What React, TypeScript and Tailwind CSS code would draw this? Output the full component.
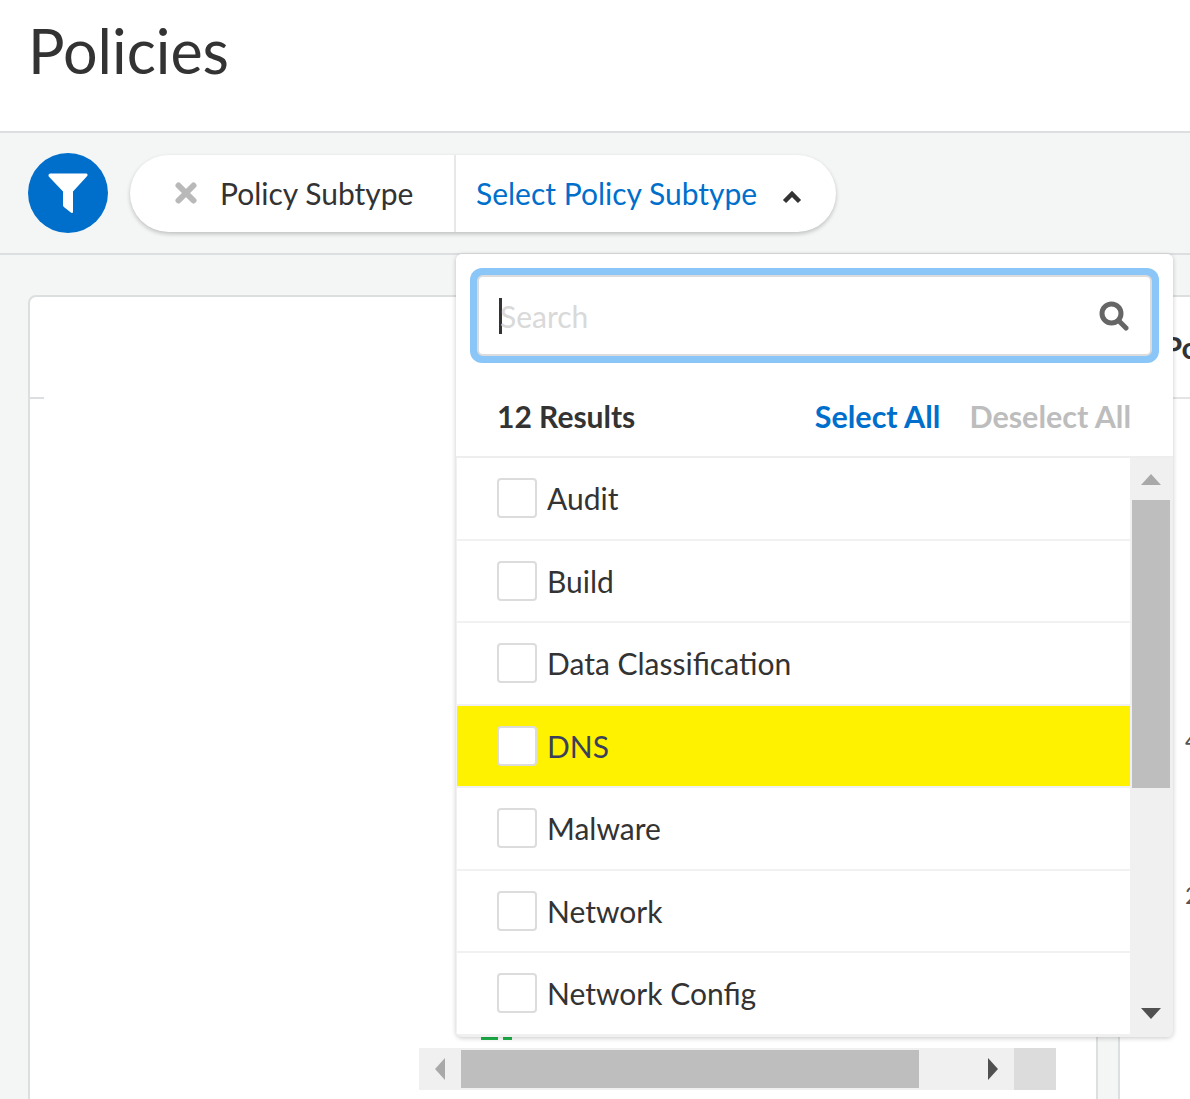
const options = ["Audit", "Build", "Data Classification", "DNS", "Malware", "Network", "Network Config"];

function FilterIcon() {
  return (
    <svg viewBox="0 0 40 40" className="w-[40px] h-[40px]">
      <path
        d="M0.5 2.5 C0.5 1.2 1.2 0.5 2.5 0.5 H38 C39.5 0.5 40 2 39.2 3 L25 18.5 V38.5 C25 40 24 40.3 23.2 39.7 L16.5 34.5 C15.5 33.8 15 33 15 32 V18.5 L1 3.8 C0.7 3.4 0.5 3 0.5 2.5 Z"
        fill="#fff"
      />
    </svg>
  );
}

function ClearIcon() {
  return (
    <svg viewBox="0 0 22 22" className="w-[22px] h-[22px] ml-[1px] -mt-[2px]">
      <path d="M3.5 3.5 L18.5 18.5 M18.5 3.5 L3.5 18.5" stroke="#b9b9b9" strokeWidth="6" strokeLinecap="round" />
    </svg>
  );
}

function ChevronUp() {
  return (
    <svg viewBox="0 0 20 14" className="w-[20px] h-[14px] mt-[6px]">
      <path d="M2.5 11.5 L10 4 L17.5 11.5" fill="none" stroke="#333" strokeWidth="4.5" strokeLinejoin="miter" />
    </svg>
  );
}

function SearchIcon() {
  return (
    <svg viewBox="0 0 30 30" className="w-[30px] h-[30px] mr-[-1px]">
      <circle cx="12.5" cy="12.5" r="9.5" fill="none" stroke="#666" strokeWidth="5" />
      <path d="M19.5 19.5 L27 27" stroke="#666" strokeWidth="5" strokeLinecap="round" />
    </svg>
  );
}

function OptionRow({ label }: { label: string }) {
  const active = label === "DNS";
  return (
    <div
      className={
        "flex items-center h-[82.5px] pl-[40px] gap-[10px] border-b-2 border-[#f1f1f1] " +
        (active ? "bg-[#fff200]" : "bg-white")
      }
    >
      <span className="w-[40px] h-[40px] shrink-0 rounded-[4px] bg-white border-2 border-[#dcdcdc]" />
      <span className={"text-[30px] leading-none " + (active ? "text-[#3a3f5c]" : "text-[#333]")}>{label}</span>
    </div>
  );
}

function OptionsScrollbar() {
  return (
    <div className="w-[42px] shrink-0 mr-[1px] -mb-[3px] bg-[#f0f0f0] flex flex-col items-center">
      <div className="h-[42px] w-full flex items-center justify-center">
        <span className="w-0 h-0 border-x-[10px] border-x-transparent border-b-[11px] border-b-[#a9a9a9]" />
      </div>
      <div className="w-[38px] h-[288px] bg-[#bebebe]" />
      <div className="flex-1 w-full flex items-end justify-center pb-[18px]">
        <span className="w-0 h-0 border-x-[10px] border-x-transparent border-t-[11px] border-t-[#505050]" />
      </div>
    </div>
  );
}

function Dropdown() {
  return (
    <div className="absolute left-[456px] top-[254px] w-[717px] h-[783px] bg-[#f0f0f0] rounded-[6px] shadow-[0_1px_5px_rgba(0,0,0,0.22)] overflow-hidden flex flex-col">
      <div className="bg-white px-[14px] pt-[14px]">
        <div className="h-[95px] w-[689px] rounded-[12px] bg-[#8ac6f8] p-[7px]">
          <div className="h-full rounded-[6px] bg-white border-2 border-[#dcdcdc] flex items-center justify-between pl-[20px] pr-[22px]">
            <div className="flex items-center">
              <span className="w-[3px] h-[36px] bg-[#333]" />
              <span className="text-[30px] leading-none text-[#d9d9d9] -ml-[2px]">Search</span>
            </div>
            <SearchIcon />
          </div>
        </div>
      </div>
      <div className="bg-white h-[95px] shrink-0 flex items-center justify-between pl-[41px] pr-[42px] pt-[14px] border-b-2 border-[#eeeeee]">
        <span className="text-[30px] leading-none font-bold text-[#333] -mt-[2px]">12 Results</span>
        <div className="flex items-center gap-[29px] text-[30.5px] leading-none font-bold">
          <span className="text-[#006fcc]">Select All</span>
          <span className="text-[#bdbdbd]">Deselect All</span>
        </div>
      </div>
      <div className="flex-1 min-h-0 flex mb-[3px]">
        <div className="flex-1 overflow-hidden border-l border-[#f1f1f1] bg-white">
          {options.map((o) => (
            <OptionRow key={o} label={o} />
          ))}
        </div>
        <OptionsScrollbar />
      </div>
    </div>
  );
}

function TableScrollbar() {
  return (
    <div className="absolute left-[419px] top-[1048px] w-[637px] h-[42px] flex bg-[#f0f0f0]">
      <div className="w-[42px] flex items-center justify-center">
        <span className="w-0 h-0 border-y-[11px] border-y-transparent border-r-[10px] border-r-[#a9a9a9]" />
      </div>
      <div className="w-[458px] h-[38px] my-[2px] bg-[#bebebe]" />
      <div className="w-[95px] flex items-center justify-end pr-[16px]">
        <span className="w-0 h-0 border-y-[11px] border-y-transparent border-l-[10px] border-l-[#505050]" />
      </div>
      <div className="w-[42px] bg-[#dcdcdc]" />
    </div>
  );
}

export default function App() {
  return (
    <div className="relative h-[1099px] overflow-hidden bg-[#f4f5f5] font-['Lato',sans-serif] text-[#333]">
      <header className="h-[133px] bg-white border-b-2 border-[#dcdfdf] pl-[28px] pt-[13px]">
        <h1 className="text-[61px] leading-[76px] font-normal text-[#333]">Policies</h1>
      </header>

      <div className="h-[122px] border-b-2 border-[#dcdfdf] pl-[28px] pt-[20px] flex items-start gap-[22px]">
        <div className="w-[80px] h-[80px] rounded-full bg-[#006fcc] flex items-center justify-center">
          <FilterIcon />
        </div>
        <div className="h-[77px] mt-[2px] flex rounded-full bg-white shadow-[0_2px_4px_rgba(0,0,0,0.22)]">
          <div className="w-[326px] flex items-center pl-[44px] gap-[23px] border-r-2 border-[#e8e8e8]">
            <ClearIcon />
            <span className="text-[30px] leading-none -mt-[2px]">Policy Subtype</span>
          </div>
          <div className="w-[380px] flex items-center pl-[20px] gap-[25px]">
            <span className="text-[30px] leading-none text-[#006fcc] -mt-[2px]">Select Policy Subtype</span>
            <ChevronUp />
          </div>
        </div>
      </div>

      <div className="flex gap-[20px] pl-[28px] pt-[40px]">
        <div className="w-[1070px] h-[900px] shrink-0 bg-white border-2 border-[#dcdfdf] rounded-t-[8px]">
          <div className="mt-[100px] w-[14px] h-[2px] bg-[#dcdfdf]" />
        </div>
        <div className="flex-1 h-[900px] bg-white border-l-2 border-t-2 border-[#dcdfdf] overflow-hidden">
          <div className="h-[102px] border-b-2 border-[#e4e4e4] pl-[43px] pt-[28px] text-[31px] leading-[44px] font-bold whitespace-nowrap">
            Po
          </div>
          <div className="pl-[65px] pt-[329px] text-[24px] leading-none text-[#555]">4</div>
          <div className="pl-[65px] pt-[131px] text-[24px] leading-none text-[#555]">2</div>
        </div>
      </div>

      <div className="absolute left-[481px] top-[1036px] flex gap-[5px]">
        <span className="w-[17px] h-[4px] bg-[#1db34a]" />
        <span className="w-[9px] h-[4px] bg-[#1db34a]" />
      </div>
      <TableScrollbar />
      <Dropdown />
    </div>
  );
}
